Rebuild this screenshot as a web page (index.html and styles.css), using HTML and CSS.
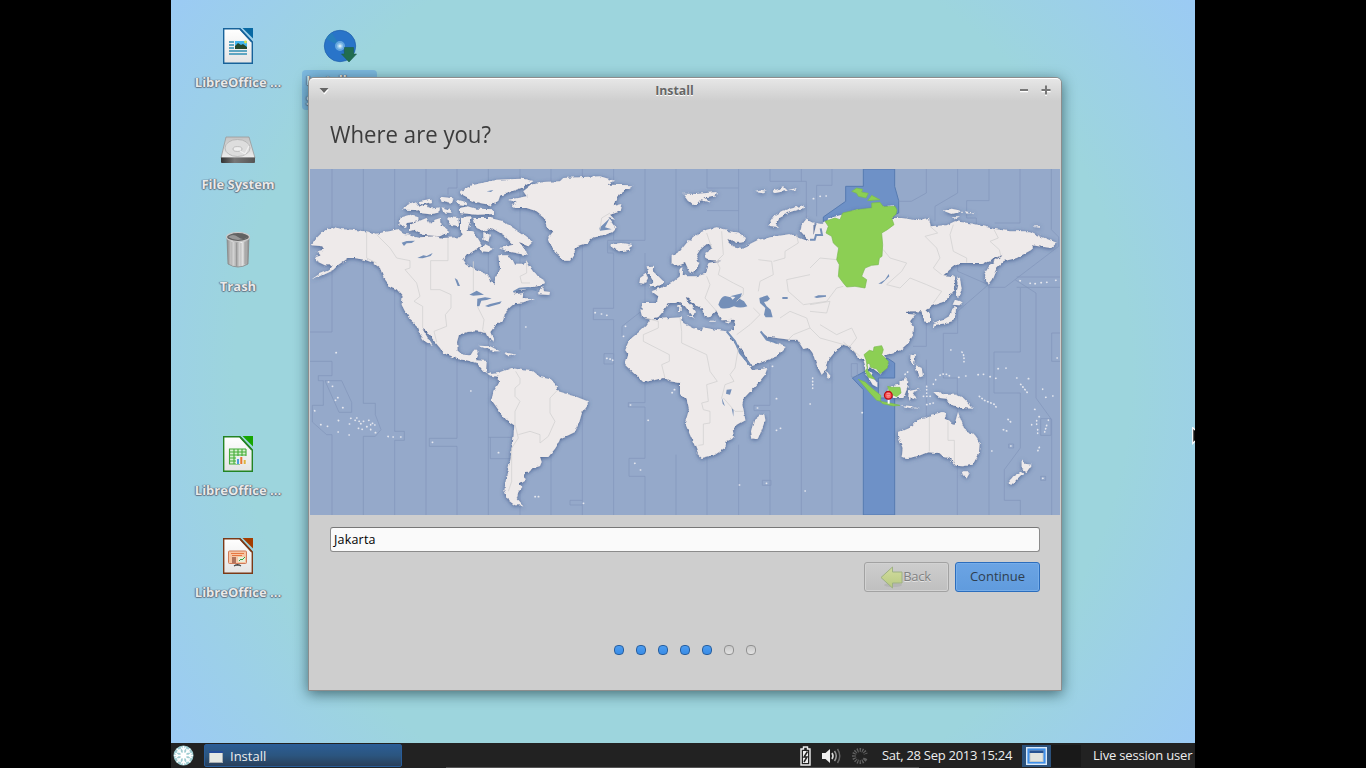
FILE: index.html
```html
<!DOCTYPE html>
<html lang="en">
<head>
<meta charset="utf-8">
<title>Install</title>
<link rel="stylesheet" href="styles.css">
</head>
<body>
<svg class="defs" width="0" height="0">
  <defs>
    <linearGradient id="paper" x2="0" y2="1"><stop offset="0" stop-color="#fff"/><stop offset="1" stop-color="#e4e4e4"/></linearGradient>
    <linearGradient id="metal"><stop offset="0" stop-color="#8b8b8b"/><stop offset=".25" stop-color="#dedede"/><stop offset=".45" stop-color="#a5a5a5"/><stop offset=".65" stop-color="#efefef"/><stop offset="1" stop-color="#888"/></linearGradient>
    <linearGradient id="drive" x2="0" y2="1"><stop offset="0" stop-color="#c4c4c4"/><stop offset="1" stop-color="#ededed"/></linearGradient>
    <linearGradient id="driveFront"><stop offset="0" stop-color="#333"/><stop offset=".4" stop-color="#777"/><stop offset="1" stop-color="#555"/></linearGradient>
    <linearGradient id="arrow" x2="0" y2="1"><stop offset="0" stop-color="#d2dca0"/><stop offset="1" stop-color="#b7c980"/></linearGradient>
  </defs>
</svg>
<main class="desktop">
  <section class="icons">
    <div class="item c1 r1">
      <svg class="glyph" width="30" height="36" viewBox="0 0 30 36"><path d="M.7.7H17L29.3 14V35.3H.7Z" fill="url(#paper)" stroke="#17629a" stroke-width="1.4"/><path d="M19.5 0H30V10.5Z" fill="#0869a3"/><path d="M17 1L29 14" stroke="#17629a" stroke-width="1.8"/><path d="M6 14h5M6 17h5M6 20h5M6 23h18M6 26h18" stroke="#318fb4" stroke-width="1.3"/><rect x="12" y="13" width="12" height="8" fill="#43b5ee"/><path d="M12 21v-3l3-3 3 2 2-1 4 3v2Z" fill="#26482c"/><circle cx="22.5" cy="14" r="1.4" fill="#dfe647"/></svg>
      <span class="label">LibreOffice ...</span>
    </div>
    <div class="item c1 r2">
      <svg class="glyph low" width="36" height="28" viewBox="0 0 36 28"><path d="M6 1H29L35 22H1Z" fill="url(#drive)" stroke="#999" stroke-width=".8"/><ellipse cx="17.5" cy="12" rx="12.5" ry="8.5" fill="#ddd" stroke="#aaa" stroke-width=".7"/><ellipse cx="17.5" cy="13" rx="4.5" ry="2.4" fill="#eee" stroke="#aaa" stroke-width=".7"/><path d="M29 10L25 18L20 15" fill="none" stroke="#f0f0f0" stroke-width="1.2"/><path d="M1 21.5H35V26Q35 27 34 27H2Q1 27 1 26Z" fill="url(#driveFront)"/></svg>
      <span class="label">File System</span>
    </div>
    <div class="item c1 r3">
      <svg class="glyph" width="26" height="36" viewBox="0 0 26 36"><path d="M2 5L3 32Q13 38 23 32L24 5Z" fill="url(#metal)" stroke="#888" stroke-width=".8"/><path d="M7 10V33M11.5 11V34M16 11V34M20 10V32" stroke="#888" stroke-opacity=".55"/><ellipse cx="13" cy="5" rx="11.5" ry="4.5" fill="#626262" stroke="#ccc" stroke-width="1.2"/><path d="M3 5Q8 1 13 5T23 5Q13 11 3 5Z" fill="#979797"/></svg>
      <span class="label">Trash</span>
    </div>
    <div class="item c1 r5">
      <svg class="glyph" width="30" height="36" viewBox="0 0 30 36"><path d="M.7.7H17L29.3 14V35.3H.7Z" fill="url(#paper)" stroke="#238423" stroke-width="1.4"/><path d="M19.5 0H30V10.5Z" fill="#16a600"/><path d="M17 1L29 14" stroke="#238423" stroke-width="1.8"/><path d="M6 13h17v15H6Z" fill="#d6f0ce"/><path d="M6 13h17M6 16h17M6 19h17M6 22h17M6 25h17M6 28h11M6.5 13v15M11 13v15M15 13v15M19 13v8M23 13v8" stroke="#43ac37" stroke-width="1.1"/><rect x="13" y="20" width="11" height="8" fill="#eee"/><path d="M15 28v-5" stroke="#4d9ddd" stroke-width="2"/><path d="M18.3 28v-7" stroke="#e77532" stroke-width="2"/><path d="M21.7 28v-4" stroke="#dfb43e" stroke-width="2"/></svg>
      <span class="label">LibreOffice ...</span>
    </div>
    <div class="item c1 r6">
      <svg class="glyph" width="30" height="36" viewBox="0 0 30 36"><path d="M.7.7H17L29.3 14V35.3H.7Z" fill="url(#paper)" stroke="#7b3a18" stroke-width="1.4"/><path d="M19.5 0H30V10.5Z" fill="#a43d00"/><path d="M17 1L29 14" stroke="#7b3a18" stroke-width="1.8"/><rect x="5.5" y="13" width="18" height="12.500" rx="1" fill="#f8c6a5" stroke="#cf7b59"/><path d="M8 15.500h13M9 17.500h10" stroke="#e77640"/><path d="M9 20h4M9 22h4M9 24h4" stroke="#985844" stroke-width="1.4"/><path d="M15 19h7v5h-7Z" fill="#e9eedb"/><path d="M16 23l2-2 1 1 3-3" fill="none" stroke="#39a243"/><path d="M14.500 26v1M11 28l2-1h3l2 1" fill="none" stroke="#444" stroke-width="1.3"/></svg>
      <span class="label">LibreOffice ...</span>
    </div>
    <div class="item c2 r1">
      <svg class="glyph disc" width="34" height="34" viewBox="0 0 34 34"><circle cx="17" cy="17" r="15.700" fill="#2974c9" stroke="#2363af" stroke-width=".8"/><path d="M17 17L3 10A16 16 0 0 1 9 4Z" fill="#277fbc"/><path d="M17 17L30 25A16 16 0 0 1 25 31Z" fill="#2467bb"/><circle cx="17" cy="17" r="4" fill="#8fc5eb" stroke="#65a6df" stroke-width="2"/><circle cx="17" cy="17" r="1.600" fill="#d9edf7"/><path d="M21.500 18.500H30.500V25H33.500L26 33L18.500 25H21.500Z" fill="#216d50" stroke="#1d604a" stroke-width=".6"/></svg>
      <span class="label selected">Install<br>System</span>
    </div>
  </section>

  <section class="window">
    <header class="titlebar">
      <svg width="12" height="10" viewBox="0 0 12 10"><path d="M2 4.500H11L6.500 9.500Z" fill="#fff"/><path d="M1.500 3H10.500L6 8Z" fill="#666"/></svg>
      <span class="title">Install</span>
      <svg width="34" height="12" viewBox="0 0 34 12"><path d="M1 7.500h8M22.500 7.500h9M27 3v9" stroke="#fff" stroke-width="1.500"/><path d="M1 6h8M22.500 6h9M27 1.500v9" stroke="#777" stroke-width="2"/></svg>
    </header>
    <h1 class="heading"><span>Where are you?</span></h1>
    <svg class="map" viewBox="0 3 2250 1038" preserveAspectRatio="none">
      <defs>
        <filter id="coast" x="-5%" y="-5%" width="110%" height="110%">
          <feTurbulence type="fractalNoise" baseFrequency=".065" numOctaves="2" seed="8" result="n"/>
          <feDisplacementMap in="SourceGraphic" in2="n" scale="12" xChannelSelector="R" yChannelSelector="G" result="d"/>
          <feDropShadow in="d" dx="0" dy="3" stdDeviation="6" flood-color="#405c8b" flood-opacity=".9"/>
        </filter>
      </defs>
      <rect y="3" width="2250" height="1038" fill="#95a9ca"/>
      <path fill="#6e91c7" stroke="#577bb1" stroke-width="3" d="M1660 3H1754V55L1766 98V135L1700 160H1540V147L1607 100V55H1660ZM1660 1041V665L1627 630L1665 610L1690 570L1735 572L1754 585V630H1705V690H1754V1041Z"/>
      <g class="zones">
        <path d="M66 3V492H0M0 580H66V623H25V638H40V712H7V762L50 800H66V1041M160 3V706H196V740L213 785L196 805H160V1041M254 3V790H283V817H254V1041M348 3V1041M441 3V60H414V80M441 500V811H358V835H441V1041M535 3V1041M535 808H607V872H541V808M630 3V545M630 930V1041M723 3V40M723 820V1041M45 638H95L125 703V733H87Z"/>
        <path d="M817 3V1041M911 3V217H893V255H911V421H850V455H911V1041M1005 3V217H911M1005 255V421L936 475V505M1005 640V704H955V717H1005V871H957V925H1005V1041M1098 3V270M1098 860V1041M1191 3V60H1286M1286 3V200M1191 128H1286M1191 870V1041M1286 830V1041M1380 3V40H1489V150M1380 588V712H1332V728H1380V1041M1474 3V40M1474 530V1041M817 997H780V1011H817M882 557H911V588H882ZM1357 937h26v15h-26Z"/>
        <path d="M1566 3V52H1520V145M1566 540V1041M1849 3V75L1804 100H1766M1943 3V75L1875 115V160M2037 3V98H1970V150H1999V190M2130 3V165H2054M2224 3V185L2246 207V235L2115 335L2178 375V690L2225 755V1041M1943 285V310L2035 350L1943 430V496H1900V630H1942V1041M1849 430V535H1809M1849 575V760M2037 340V1041M2131 360V552H2052V675H2131V840L2083 905V997H2131V1041M2250 495H2225V580H2250M2120 327H2250M2120 358H2250M2035 358H2085L2115 335M1624 587h18v40h-18ZM2192 752h31v50h-31ZM2096 828h15v12h-15ZM2192 925h15v12h-15Z"/>
      </g>
      <g fill="#eeeaea" filter="url(#coast)">
        <!-- North and Central America -->
        <path d="M22 208L40 190L75 177L95 184L125 185L165 190L200 197L245 188L262 184L280 197L300 200L330 208L380 205L400 210L450 208L468 188L490 190L500 205L515 230L495 246L470 262L460 275L470 290L500 305L535 320L540 342L553 348L557 325L570 305L565 262L590 262L605 270L615 290L640 290L650 278L662 300L672 315L700 332L705 345L690 353L650 360L620 368L612 380L640 375L638 391L675 390L640 403L615 405L600 418L585 435L580 455L550 480L541 492L552 520L543 520L530 495L500 490L470 492L447 500L441 522L443 548L457 560L480 562L490 545L507 545L500 565L495 577L530 579L528 610L545 618L570 614L570 628L545 623L520 608L500 585L470 577L440 572L400 555L390 540L375 522L350 490L337 482L368 535L345 520L328 495L318 470L300 455L285 430L275 410L278 385L260 364L240 355L222 330L210 300L190 285L165 275L130 270L115 270L85 290L70 305L35 322L5 334L28 318L60 305L68 292L45 292L20 280L15 267L32 262L20 250L45 245L40 235L5 232ZM680 375L700 358L702 370L720 372L718 381L685 379Z"/>
        <!-- Arctic archipelago -->
        <path d="M272 148L300 140L325 148L325 160L290 165L285 180L268 170ZM300 170L350 150L360 170L375 155L392 150L395 170L418 190L390 205L335 200L315 185L300 190ZM285 115L315 100L330 118L350 110L360 122L390 118L388 134L360 139L330 135L318 126L280 125ZM325 100L365 92L366 102L330 110ZM390 86L430 91L425 104L395 98ZM412 148L445 150L447 175L415 168ZM450 150L485 148L475 175L470 210L450 190ZM450 70L490 50L560 35L640 32L670 40L640 58L610 68L570 84L565 98L545 112L510 105L490 100L460 85ZM450 120L475 115L500 122L552 124L552 138L500 140L450 135ZM490 150L540 150L580 160L610 180L640 200L668 222L655 235L630 225L645 245L650 262L590 250L570 240L610 230L580 200L545 180L525 190L500 180ZM508 240L525 232L548 242L535 252L515 250ZM520 192L540 200L535 222L520 215ZM395 118L420 125L425 135L400 133ZM440 95L460 100L470 112L445 108Z"/>
        <path d="M595 95L650 85L640 70L665 50L700 42L750 40L760 30L810 28L870 25L915 38L890 50L970 52L950 65L930 78L915 100L910 115L937 108L932 130L900 140L915 155L895 150L917 180L905 193L875 205L850 208L830 225L800 235L790 260L780 278L765 278L745 265L725 235L715 210L730 190L710 180L705 150L680 130L650 120L620 120L605 110L620 103Z"/>
        <!-- South America -->
        <path d="M566 615L605 600L640 607L670 610L690 627L720 634L740 657L742 669L795 685L833 700L833 712L815 737L808 762L795 792L775 802L750 812L748 822L735 842L715 867L690 867L695 882L690 894L665 902L660 910L645 912L640 927L648 934L627 947L637 957L625 972L620 990L635 1007L640 1012L615 1012L595 997L583 967L590 922L600 882L610 812L613 772L590 757L570 732L545 697L550 672L567 645Z"/>
        <!-- Eurasia -->
        <path d="M995 405L1040 405L1045 385L1025 370L1065 355L1085 345L1110 325L1108 305L1120 298L1118 318L1130 325L1160 325L1185 318L1190 300L1195 286L1235 278L1190 275L1186 255L1208 240L1205 230L1190 228L1170 245L1158 265L1168 285L1155 310L1140 318L1125 285L1100 295L1085 285L1085 265L1110 250L1130 225L1160 198L1190 185L1220 178L1250 185L1255 193L1290 197L1308 210L1302 222L1280 225L1255 212L1265 234L1295 240L1320 228L1345 215L1400 205L1440 198L1475 212L1500 222L1472 190L1475 170L1490 152L1510 162L1510 205L1520 165L1537 168L1560 150L1650 125L1750 112L1758 125L1745 150L1775 150L1820 157L1857 150L1862 175L1910 172L1935 160L1990 167L2050 182L2100 190L2160 190L2190 205L2240 224L2224 240L2165 232L2165 245L2120 270L2080 280L2060 300L2045 335L2033 350L2022 320L2040 290L2078 260L2020 285L1945 285L1925 300L1900 322L1930 325L1935 345L1930 370L1905 400L1870 412L1845 425L1860 440L1860 463L1840 460L1835 430L1800 430L1788 437L1815 440L1800 460L1812 480L1810 500L1795 525L1770 547L1740 557L1722 562L1735 590L1710 617L1680 595L1675 605L1690 630L1702 645L1702 658L1688 650L1670 620L1665 590L1658 570L1645 575L1640 560L1620 535L1600 530L1580 545L1552 580L1545 610L1535 620L1520 590L1508 555L1497 540L1480 543L1462 515L1440 515L1400 510L1370 505L1352 490L1365 510L1380 520L1395 525L1427 537L1400 565L1325 595L1320 585L1300 555L1285 530L1255 492L1270 485L1275 455L1235 457L1218 430L1200 448L1185 447L1175 420L1155 408L1130 390L1125 395L1150 420L1158 432L1146 442L1125 415L1112 402L1095 405L1075 405L1060 430L1045 447L1020 454L1000 448L995 430Z"/>
        <!-- Africa and Madagascar -->
        <path d="M1020 455L1080 450L1115 448L1120 465L1150 480L1175 490L1180 478L1215 485L1250 490L1270 520L1290 555L1322 600L1330 606L1372 600L1365 620L1340 650L1302 690L1297 710L1306 755L1280 770L1268 785L1273 810L1250 820L1245 840L1215 860L1175 870L1165 860L1155 835L1140 800L1125 765L1137 725L1130 695L1110 675L1110 645L1080 640L1060 630L1040 635L1000 642L965 610L945 590L955 560L945 545L955 522L965 510L990 490L1010 470ZM1362 735L1366 755L1345 812L1327 812L1323 790L1332 758Z"/>
        <!-- European and Arctic islands -->
        <path d="M900 228L935 225L965 230L960 245L930 250L905 240ZM1010 295L1030 293L1028 310L1045 325L1060 340L1055 352L1018 355L1030 340L1015 315ZM990 330L1008 317L1014 330L1005 347L988 345ZM1120 77L1160 78L1220 72L1217 83L1180 88L1205 104L1170 96L1155 114L1135 97ZM1374 170L1390 145L1420 128L1480 112L1482 119L1440 132L1405 150L1397 167L1410 180L1380 177ZM1335 69L1350 65L1370 68L1360 73ZM1390 68L1420 58L1430 68L1395 75ZM1435 66L1460 60L1455 67ZM1105 412L1112 410V432L1104 432ZM1130 443L1148 442L1150 449ZM1198 458H1217V461H1198ZM1245 460L1265 455L1260 464Z"/>
        <!-- East Asian islands -->
        <path d="M1900 128L1925 122L1960 130L1925 138ZM1965 130L1995 134L1970 137ZM1927 148L1950 148L1940 153ZM2168 176L2190 174L2190 179ZM1938 325L1950 330L1955 365L1943 390L1938 370L1943 345ZM1935 395L1958 403L1948 412L1928 410ZM1927 423L1938 415L1937 438L1930 458L1908 466L1878 470L1866 482L1868 465L1900 455L1920 443ZM1550 610L1562 625L1555 632L1548 625ZM1730 545L1742 543L1738 555L1732 554Z"/>
        <!-- Oceania -->
        <path d="M1802 560L1815 562L1812 590L1800 580ZM1815 590L1835 600L1840 630L1825 625ZM1740 655L1765 650L1785 630L1795 638L1792 660L1780 690L1750 690L1735 670ZM1797 670L1830 662L1808 675L1820 692L1802 687L1800 702L1795 685ZM1870 672L1890 672L1900 680L1940 680L1960 690L1975 705L1990 722L1960 720L1940 715L1920 710L1910 692L1890 690ZM1765 710L1800 714L1830 722L1800 720ZM1764 795L1799 780L1824 755L1849 750L1866 740L1899 732L1909 735L1904 752L1934 768L1944 732L1954 760L1964 785L1994 800L2012 825L2010 850L1988 890L1958 895L1938 893L1918 870L1903 868L1888 855L1853 853L1823 865L1793 870L1775 868L1778 840L1764 805ZM1955 910L1980 910L1970 928L1960 925ZM2135 872L2145 887L2165 890L2150 912L2135 902ZM2132 911L2140 917L2110 947L2093 945L2110 925ZM505 533L540 535L570 550L550 550ZM585 553L620 560L595 565ZM560 563L575 563Z"/>
      </g>
      <g fill="#748fb8">
        <path d="M1225 410Q1232 386 1245 384L1262 388L1268 395L1276 387L1260 385L1296 376L1290 393L1302 400L1312 415Q1290 422 1272 415Q1250 425 1232 420ZM1348 390L1372 382L1380 392L1372 400L1362 402L1370 415L1382 425L1388 448L1367 448L1362 440L1366 420L1350 405ZM478 380L500 368L522 380L490 383ZM502 392L525 388L545 391L530 396L514 398L508 415L501 415ZM525 414L540 408L575 400L570 407L535 417ZM275 224L290 219L315 218L305 225L290 226L282 234ZM322 270L340 262L350 264L368 255L362 264L338 271ZM434 330L442 335L450 354L443 354ZM1250 665L1265 664L1260 680L1248 677ZM1235 688L1245 715L1238 707ZM1265 720L1271 725L1270 746ZM1736 318L1738 325L1715 347L1705 347L1725 335ZM1512 387L1525 382L1548 382V386L1520 390ZM530 70L550 66L543 72ZM868 180L900 150L897 155L885 178L905 184L870 188Z"/>
        <path fill="none" stroke="#748fb8" stroke-width="6" d="M610 372L628 362L655 360L680 366M1250 490L1275 520L1290 555L1322 593M1352 490L1370 515L1400 524M1417 390h16M1500 215h14l4-14h18l-4-20"/>
      </g>
      <path class="borders" d="M170 190V270L200 285M200 200L240 240L260 270L300 278V300L285 305L320 345L330 385L312 400L338 415V480M414 210V278H362V365H390L423 380V420L406 440L410 475L372 490L380 522M490 280V370M502 415L522 455L518 485L525 495M650 278V315L630 325L635 345L660 345M617 610L630 632V647L615 660V685L630 700L615 730V770L625 810L605 840V940L595 970M625 800L660 790L690 800L690 825L715 805L735 760L720 735V690L740 669"/>
      <path class="borders" d="M1190 195L1205 240M1235 190L1240 260L1220 280L1230 300L1225 320L1270 345L1300 360V380L1280 400M1190 325L1200 350L1185 390L1220 430M1110 450L1115 490V525L1190 560L1200 610L1222 640L1190 650L1195 700L1175 705L1180 725L1200 730V765L1180 768V830L1165 832M1005 450L1045 460V480L1000 500V520L1078 560V580L1055 590L1065 630M1285 540L1275 600L1260 620L1272 640L1245 650L1235 690M1240 690L1275 730H1300M1330 420L1350 440L1320 470L1280 500M1345 275L1385 280L1390 320L1350 340L1345 370M1460 200L1465 225L1425 250V270L1390 280M1500 320L1430 335L1435 370L1480 410L1550 400L1580 360L1600 355M1410 450L1440 430L1490 450L1500 480L1450 500L1435 515M1500 430L1550 435L1560 400L1500 410M1500 480L1530 510L1620 535L1640 510L1625 480L1580 500L1530 470M1720 245L1740 270L1790 285L1775 310L1730 350L1770 360L1800 330L1850 350L1895 370L1870 405M1860 175L1883 195L1845 205L1880 240L1890 270L1870 300L1895 320M1930 170L1920 200L1930 250L1970 270V284M2052 185L2065 210L2040 220L2068 245L2072 262M1500 300L1530 270L1580 275M1858 745V850M1914 760V817H1933V885M1600 522L1650 565M870 185L875 150L900 135"/>
      <g fill="#8ccf54" stroke="#79b950" stroke-width="2">
        <path d="M1545 160L1575 150L1590 155L1598 135L1640 125L1685 120L1685 105L1710 103L1720 116L1755 115L1761 126L1758 138L1745 150L1752 170L1732 185L1715 195L1718 230L1716 265L1708 270L1705 290L1685 292L1665 300L1655 325L1670 335L1665 360L1635 355L1610 357L1600 345L1585 325L1588 290L1580 275L1586 240L1570 225L1565 205L1548 195L1555 175ZM1625 70L1640 60L1658 64L1655 72L1675 76L1668 90L1645 85L1640 76ZM1673 98L1685 82L1710 95Z"/>
        <path d="M1662 560L1678 547L1690 550L1692 537L1715 533L1720 545L1715 560L1735 580L1732 600L1710 617L1700 603L1682 598L1678 585L1670 590L1673 608L1695 634L1675 628L1665 608L1673 600L1668 575ZM1645 634L1665 642L1685 660L1712 682L1712 700L1700 697L1680 675ZM1710 700L1740 705L1770 712L1750 714L1718 707ZM1733 655L1745 658L1770 658L1773 675L1760 686L1740 677Z"/>
      </g>
      <path class="islands" d="M78 554h1M55 642h1M67 655h1M83 689h1M76 697h1M98 719h1M14 728l3 4M32 770h1M52 775h1M85 757l4 4M84 792h1M117 801h1M118 768h6M122 751h8M135 757h10M140 750h4M147 760h8M152 767h8M160 760h2M145 781h1M156 784h1M170 776h1M176 757h1M182 770v1M182 784v8M187 766h1M194 771h6M196 794h6M234 805l4 6M249 807h1M272 807h1M367 823h1M482 669h1M565 854h3M675 986h14M647 477h1M855 434h1M874 438h2M890 442h3M946 475h1M940 505h4M890 571l18 4v8M961 711h1M1014 757h1M974 886h1M991 906h1M820 1006h4M1093 665h1M1086 674h1M1342 720h1M1399 692h1M1399 787h1M1411 781h1M1369 946h1M1288 951h1M1485 969h3M1387 595h3M1508 630v40M1500 708h3M1656 734h1M2130 338l6 2M2160 346h1M2175 347h3M2193 344h1M2210 343h1M2237 337h4M2102 834h1M2045 849h1M2198 931h1M1785 619l14-12M1922 546h1M1956 552l6 12v20M2004 620h1M2020 619h1M2040 626h1M2057 631h1M1946 628h3M1967 624h6M1870 648v1M1877 635v1M1890 622l6-4 15 1 8 5M2064 602h4M2088 600v3M2120 630h1M2132 649l10 12 14 18M2155 632h8M2198 663v1M2207 688h10M2228 684h8M1850 655v25M1840 685h30M1850 710l20-5M2008 685l15 12 30 12 10 15M2080 785l16 6M2094 754l8 8M2174 724l8 4M2187 746h1M2180 758v20M2165 770v5M2183 785v18M2215 756v1M2210 772l-6 20M2188 838l-6 14M2241 570h1M1530 85h1M1548 84h3M1510 92h1"/>
      <g><path d="M1736 694v13" stroke="#fff" stroke-width="6"/><circle cx="1735" cy="682" r="11.500" fill="#fb5759" stroke="#bd0b11" stroke-width="4"/><path d="M1730 676h10M1730 682h10M1731 687h8" stroke="#ffc0bd" stroke-width="2"/></g>
    </svg>
    <div class="form">
      <div class="entry">Jakarta</div>
      <div class="buttons">
        <div class="button back"><svg width="23" height="23" viewBox="0 0 23 23"><ellipse cx="13" cy="19" rx="9" ry="2" fill="#b5b5b5"/><path d="M1 11.500L12.500 1V6H22V17H12.500V22Z" fill="url(#arrow)" stroke="#9eb184"/></svg><span>Back</span></div>
        <div class="button next"><span>Continue</span></div>
      </div>
      <div class="dots"><i class="on"></i><i class="on"></i><i class="on"></i><i class="on"></i><i class="on"></i><i></i><i></i></div>
    </div>
  </section>

  <svg class="cursor" width="3" height="18" viewBox="0 0 3 18"><path d="M.7 .500V16.500L6 11V6Z" fill="#111" stroke="#fff" stroke-width="1.200"/></svg>

  <footer class="taskbar">
    <svg class="menu" width="21" height="21" viewBox="0 0 21 21"><circle cx="10.500" cy="10.500" r="10" fill="#a0cdd2"/><g stroke="#fff" stroke-width="1.500"><path d="M10.500 1V20M1 10.500H20M3.800 3.800L17.200 17.200M17.200 3.800L3.800 17.200"/><path d="M8 2.500l2.500 2.500L13 2.500M8 18.500l2.500-2.500 2.500 2.500M2.500 8L5 10.500 2.500 13M18.500 8L16 10.500l2.500 2.500M4 7h3V4M17 7h-3V4M4 14h3v3M17 14h-3v3" fill="none"/></g><circle cx="10.500" cy="10.500" r="3" fill="#fff"/></svg>
    <div class="task"><svg width="14" height="12" viewBox="0 0 14 12"><rect x=".5" y=".5" width="13" height="11" fill="#e5e8e3" stroke="#a8adb0"/><path d="M0 0H14V2H0Z" fill="#244d9b"/></svg><span>Install</span></div>
    <div class="tray">
      <svg width="11" height="20" viewBox="0 0 11 20"><path d="M3.500 1h4v2h2.500v16H1V3h2.500Z" fill="none" stroke="#eee" stroke-width="1.400"/><path d="M3 5H8V17H3Z" fill="#eee"/><path d="M7.500 5.500L4 11H7L4 16" fill="none" stroke="#222" stroke-width="1.500"/></svg>
      <svg class="sound" width="20" height="16" viewBox="0 0 20 16"><path d="M0 5H3.500L8 1V15L3.500 11H0Z" fill="#eee"/><path d="M10 5Q12 8 10 11" fill="none" stroke="#ddd" stroke-width="1.600"/><path d="M12.500 3Q16 8 12.500 13" fill="none" stroke="#999" stroke-width="1.500"/><path d="M15.500 1Q20 8 15.500 15" fill="none" stroke="#666" stroke-width="1.500"/></svg>
      <svg width="18" height="18" viewBox="0 0 18 18"><circle cx="9" cy="9" r="6" fill="none" stroke="#626262" stroke-width="4" stroke-dasharray="1.200 1.160" transform="rotate(35 9 9)"/><path d="M9 9L18 6v6Z" fill="#222"/></svg>
      <span class="clock">Sat, 28 Sep 2013 15:24</span>
    </div>
    <div class="pager"><svg width="21" height="18" viewBox="0 0 21 18"><rect x=".7" y=".7" width="19.600" height="16.600" fill="#3f8fe8" stroke="#dbe9f7" stroke-width="1.400"/><rect x="4" y="4" width="13" height="10.500" fill="#e1e4df" stroke="#c4cac9"/><path d="M3.500 3.500H17.500V6H3.500Z" fill="#255291"/></svg></div>
    <div class="pager-empty"></div>
    <span class="user">Live session user</span>
  </footer>
</main>
</body>
</html>
```
FILE: styles.css
```css
* { box-sizing: border-box; }
body {
  margin: 0;
  width: 1366px;
  height: 768px;
  overflow: hidden;
  display: flex;
  justify-content: center;
  background: #000;
  font-family: "Open Sans", "Noto Sans", sans-serif;
  font-size: 13px;
}
.defs { position: absolute; }
.desktop {
  position: relative;
  width: 1024px;
  height: 768px;
  overflow: hidden;
  display: flex;
  flex-direction: column;
  background: radial-gradient(circle 640px at 512px 372px, #9dd5dd 0, #9dd5dd 70%, #9bcaf5 100%);
}
.icons {
  flex: 1;
  padding-left: 16px;
  display: grid;
  grid-template-columns: 102px 102px;
  grid-template-rows: repeat(7, 102px);
}
.item {
  display: flex;
  flex-direction: column;
  align-items: center;
  padding-top: 20px;
}
.glyph { margin: 8px 0 7px; flex: none; }
.low { margin: 14px 0 9px; }
.disc { margin: 9px 0 7px; }
.c1 { grid-column: 1; }
.c2 { grid-column: 2; }
.r1 { grid-row: 1; }
.r2 { grid-row: 2; }
.r3 { grid-row: 3; }
.r5 { grid-row: 5; }
.r6 { grid-row: 6; }
.label {
  font: bold 13px/22px "Open Sans", sans-serif;
  white-space: nowrap;
  color: #e9e9e9;
  text-shadow: 0 0 1px #567, 0 1px 1px #678, 1px 0 1px #678, -1px 0 1px #789;
}
.selected {
  width: 75px;
  height: 42px;
  margin-left: -1px;
  padding-left: 4px;
  line-height: 20px;
  background: #7db9df;
  border-radius: 4px;
}
.window {
  position: absolute;
  left: 137px;
  top: 77px;
  width: 754px;
  height: 614px;
  display: flex;
  flex-direction: column;
  background: #cecece;
  border: 1px solid #8d8d8d;
  border-radius: 6px 6px 0 0;
  box-shadow: 0 3px 14px rgba(20, 50, 60, .65);
}
.titlebar {
  height: 23px;
  padding: 0 8px 0 9px;
  display: flex;
  justify-content: space-between;
  align-items: center;
  background: linear-gradient(#e6e6e6, #cecece);
  border-top: 1px solid #fff;
  border-radius: 5px 5px 0 0;
}
.title {
  font-weight: bold;
  font-size: 12.3px;
  color: #666;
  text-shadow: 0 1px #fff;
}
.heading {
  margin: 0;
  height: 68px;
  padding: 15px 21px 0;
  font-size: 24px;
  line-height: 36px;
  font-weight: normal;
  color: #3c3c3c;
}
.heading span {
  display: inline-block;
  transform: scaleX(.924);
  transform-origin: left;
}
.map { width: 750px; height: 346px; margin-left: 1px; flex: none; }
.zones { fill: none; stroke: #7f93b8; stroke-width: 2.5; opacity: .75; }
.borders { fill: none; stroke: #d4d2d2; stroke-width: 2.5; stroke-linejoin: round; }
.islands { fill: none; stroke: #e5e7ee; stroke-width: 5; stroke-linecap: round; stroke-dasharray: 1 9; }
.form {
  flex: 1;
  padding: 12px 21px 0;
  display: flex;
  flex-direction: column;
}
.entry {
  height: 25px;
  padding-left: 3px;
  font-size: 12.5px;
  letter-spacing: .2px;
  line-height: 23px;
  color: #000;
  background: #fafafa;
  border: 1px solid #8b8b8b;
  border-top-color: #777;
  border-radius: 3px;
}
.buttons {
  margin-top: 10px;
  display: flex;
  justify-content: flex-end;
  gap: 6px;
}
.button {
  width: 85px;
  height: 30px;
  display: flex;
  align-items: center;
  justify-content: center;
  border-radius: 3px;
}
.button span { margin-bottom: 2px; }
.back {
  padding-right: 2px;
  color: #808080;
  letter-spacing: -.25px;
  text-shadow: 0 1px #e4e4e4;
  background: linear-gradient(#cdcdcd, #bfbfbf);
  border: 1px solid #a2a2a2;
  box-shadow: inset 0 0 0 1px #d2d2d2;
}
.next {
  color: #2e3e50;
  background: linear-gradient(#6ba4e4, #609bdd);
  border: 1px solid #2b6dbd;
  box-shadow: inset 0 0 0 1px #76ade9;
}
.dots {
  margin-top: 53px;
  display: flex;
  justify-content: center;
  gap: 12px;
}
.dots i {
  width: 10px;
  height: 10px;
  border: 1px solid #919191;
  border-radius: 4px;
  background: linear-gradient(#c8c8c8, #e2e2e2);
}
.dots .on { border-color: #285f9f; background: linear-gradient(#4c9cf0, #398ce6); }
.cursor { position: absolute; left: 1021px; top: 427px; }
.taskbar {
  height: 25px;
  flex: none;
  display: flex;
  align-items: center;
  color: #eee;
  background: linear-gradient(90deg, transparent 275px, #555 275px, #555 748px, transparent 748px) 0 24px / 100% 1px no-repeat, #222;
}
.menu { margin: 0 10px 0 2px; }
.task {
  width: 198px;
  height: 23px;
  padding-left: 4px;
  display: flex;
  align-items: center;
  gap: 7px;
  background: linear-gradient(#2c5d94, #2b557f 50%, #2a405b);
  border: 1px solid #295d99;
  border-radius: 2px;
}
.task svg { margin-top: 2px; }
.tray {
  margin-left: auto;
  display: flex;
  align-items: center;
}
.sound { margin: 0 9px 0 11px; }
.clock {
  margin: 0 9px 2px 13px;
  width: 131px;
  white-space: nowrap;
  letter-spacing: -.27px;
}
.pager {
  width: 29px;
  height: 22px;
  display: flex;
  align-items: center;
  justify-content: center;
  background: #2b517b;
}
.pager-empty { width: 30px; height: 22px; background: #191919; }
.user { width: 99px; margin: 0 3px 2px 12px; white-space: nowrap; letter-spacing: -.18px; }
```
